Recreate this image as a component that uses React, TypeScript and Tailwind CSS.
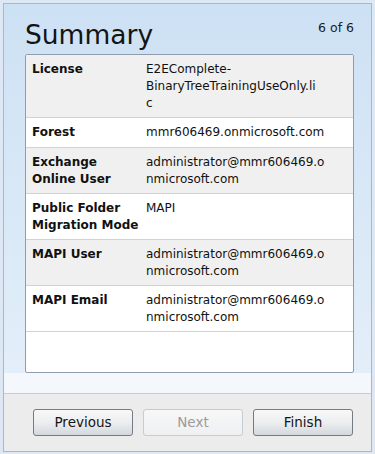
import React from 'react';

// values are split into lines the way the wizard wraps them
const rows = [
    { label: 'License', value: ['E2EComplete-', 'BinaryTreeTrainingUseOnly.li', 'c'], shaded: true },
    { label: 'Forest', value: ['mmr606469.onmicrosoft.com'], shaded: false },
    { label: 'Exchange Online User', value: ['administrator@mmr606469.o', 'nmicrosoft.com'], shaded: true },
    { label: 'Public Folder Migration Mode', value: ['MAPI'], shaded: false },
    { label: 'MAPI User', value: ['administrator@mmr606469.o', 'nmicrosoft.com'], shaded: true },
    { label: 'MAPI Email', value: ['administrator@mmr606469.o', 'nmicrosoft.com'], shaded: false },
];

function WizardButton({ label, disabled }: { label: string; disabled?: boolean }) {
    return (
        <button
            disabled={disabled}
            className={
                disabled
                    ? 'w-[100px] h-[27px] rounded-[3px] border border-[#c6ccd3] bg-gradient-to-b from-[#f7f7f7] to-[#eef0f2] text-[13.5px] text-[#9b9b9b]'
                    : 'w-[100px] h-[27px] rounded-[3px] border border-[#727b86] bg-gradient-to-b from-[#f8f8f8] via-[#eceef0] to-[#d3d8dd] text-[13.5px] text-[#151515]'
            }
        >
            {label}
        </button>
    );
}

export default function App() {
    return (
        <div className="w-[375px] h-[454px] bg-[#dde8f4] pt-[3px] px-[3px] pb-[2px] font-['DejaVu_Sans',Verdana,sans-serif]">
            <div className="h-full flex flex-col border border-[#9db9dd]">
                {/* Blue content panel */}
                <div className="bg-gradient-to-b from-[#cde1f4] to-[#e3eef9] pl-[21px] pt-[15px]">
                    <div className="flex items-start justify-between w-[329px]">
                        <h1 className="text-[26.5px] leading-[32px] text-[#141414]">Summary</h1>
                        <span className="mt-[1px] text-[12.5px] leading-[16px] text-[#1a1a1a]">6 of 6</span>
                    </div>

                    <div className="mt-[3px] w-[329px] h-[319px] bg-white border border-[#8e9cad] rounded-[2px] flex flex-col overflow-hidden">
                        {rows.map((row) => (
                            <div
                                key={row.label}
                                className={`flex shrink-0 min-h-[30px] pl-[6px] pt-[6px] pb-[5px] border-b border-[#d2d2d2] text-[12px] leading-[17px] text-[#111] ${row.shaded ? 'bg-[#f0f0f0]' : 'bg-white'}`}
                            >
                                <div className="w-[114px] pr-[4px] font-bold">{row.label}</div>
                                <div className="flex flex-col whitespace-nowrap">
                                    {row.value.map((line, i) => (
                                        <span key={i}>{line}</span>
                                    ))}
                                </div>
                            </div>
                        ))}
                    </div>
                </div>

                <div className="h-[20px] bg-[#f4f8fc]" />

                {/* Footer buttons */}
                <div className="flex-1 border-t border-[#cbcbcb] bg-[#ececec] pl-[29px] pt-[15px] flex gap-[10px] items-start">
                    <WizardButton label="Previous" />
                    <WizardButton label="Next" disabled />
                    <WizardButton label="Finish" />
                </div>
            </div>
        </div>
    );
}
